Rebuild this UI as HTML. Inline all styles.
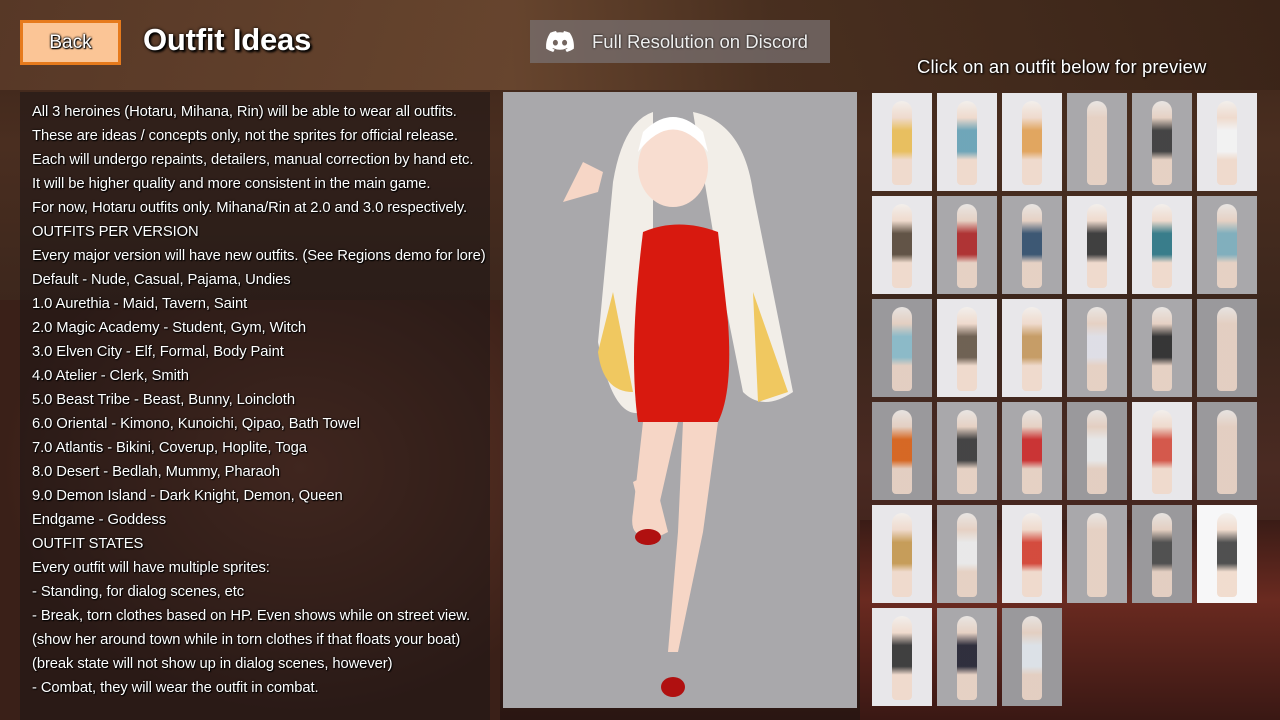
<!DOCTYPE html>
<html><head><meta charset="utf-8"><style>
*{margin:0;padding:0;box-sizing:border-box}
body{width:1280px;height:720px;overflow:hidden;position:relative;font-family:"Liberation Sans","DejaVu Sans",sans-serif;
background:linear-gradient(180deg,#3a2418 0%,#4a2e20 20%,#3b261c 45%,#4a2a22 65%,#3a1e18 85%,#2a1612 100%);}
.bg1{position:absolute;left:0;top:0;width:1280px;height:90px;background:linear-gradient(90deg,#5a3a28,#6b4830 40%,#4a3020 60%,#3a2418 100%);opacity:.9}
.bg2{position:absolute;left:860px;top:520px;width:420px;height:200px;background:linear-gradient(180deg,#3a1c16,#6a2a20 40%,#3a1814)}
.bg3{position:absolute;left:0;top:300px;width:500px;height:420px;background:radial-gradient(ellipse at 60% 40%,#6a3a2a 0%,#3a2018 70%)}
.back{position:absolute;left:20px;top:20px;width:101px;height:45px;background:#fbc596;border:3px solid #e67a1c;color:#fff;font-size:19px;text-align:center;line-height:39px;text-shadow:0 0 2px #000,0 0 2px #000,1px 1px 1px #000}
.title{position:absolute;left:143px;top:22px;color:#fff;font-size:31px;font-weight:bold;text-shadow:0 0 3px #000,2px 2px 2px #000;letter-spacing:-0.2px}
.disc{position:absolute;left:530px;top:20px;width:300px;height:43px;background:rgba(120,112,112,.75);color:#eee;font-size:18.5px;line-height:43px;text-shadow:0 0 2px #000}
.disc span{position:absolute;left:62px}
.disc svg{position:absolute;left:16px;top:11px}
.hint{position:absolute;left:917px;top:56px;color:#fff;font-size:18.5px;letter-spacing:0.1px;text-shadow:0 0 2px #000,1px 1px 2px #000}
.panel{position:absolute;left:20px;top:92px;width:470px;height:628px;background:rgba(30,22,22,.55)}
.txt{position:absolute;left:32px;top:100px;color:#fff;font-size:14.8px;line-height:24px;letter-spacing:-0.1px;text-shadow:0 0 2px #000,1px 1px 1px #000;white-space:nowrap}
.prev{position:absolute;left:503px;top:92px;width:354px;height:616px;background:#a9a8ab}
.t{position:absolute;width:60px;height:98px}
.t::after{content:"";position:absolute;left:20px;top:8px;width:20px;height:84px;border-radius:10px 10px 4px 4px;background:linear-gradient(180deg,#f4f0ec 0%,#f0d8c8 20%,var(--c,#f0d8c8) 35%,var(--c,#f0d8c8) 60%,#f0d8c8 70%,#f0d8c8 95%);opacity:.85}
.l{background:#e8e7ea}.m{background:#a9a8ab}.d{background:#9a999c}.w{background:#f7f7f8}
</style></head><body>
<div class="bg1"></div><div class="bg3"></div><div class="bg2"></div>
<div class="back">Back</div>
<div class="title">Outfit Ideas</div>
<div class="disc"><svg width="28" height="21" viewBox="0 0 28 21"><path fill="#fff" d="M23.7 1.8A23 23 0 0 0 18 0l-.7 1.5a21 21 0 0 0-6.5 0L10 0a23 23 0 0 0-5.7 1.8C.7 7.2-.3 12.5.2 17.7A23 23 0 0 0 7.2 21l1.5-2.4a15 15 0 0 1-2.3-1.1l.6-.4a16.5 16.5 0 0 0 14 0l.6.4a15 15 0 0 1-2.300 1.1l1.5 2.4a23 23 0 0 0 7-3.3c.6-6-.9-11.3-4.1-15.9zM9.4 14.5c-1.4 0-2.500-1.3-2.500-2.8s1.1-2.8 2.5-2.8 2.5 1.3 2.5 2.8-1.1 2.8-2.5 2.8zm9.2 0c-1.4 0-2.5-1.3-2.5-2.8s1.1-2.8 2.5-2.8 2.5 1.3 2.5 2.8-1.1 2.8-2.5 2.8z"/></svg><span>Full Resolution on Discord</span></div>
<div class="hint">Click on an outfit below for preview</div>
<div class="panel"></div>
<div class="txt">All 3 heroines (Hotaru, Mihana, Rin) will be able to wear all outfits.<br>These are ideas / concepts only, not the sprites for official release.<br>Each will undergo repaints, detailers, manual correction by hand etc.<br>It will be higher quality and more consistent in the main game.<br>For now, Hotaru outfits only. Mihana/Rin at 2.0 and 3.0 respectively.<br>OUTFITS PER VERSION<br>Every major version will have new outfits. (See Regions demo for lore)<br>Default - Nude, Casual, Pajama, Undies<br>1.0 Aurethia - Maid, Tavern, Saint<br>2.0 Magic Academy - Student, Gym, Witch<br>3.0 Elven City - Elf, Formal, Body Paint<br>4.0 Atelier - Clerk, Smith<br>5.0 Beast Tribe - Beast, Bunny, Loincloth<br>6.0 Oriental - Kimono, Kunoichi, Qipao, Bath Towel<br>7.0 Atlantis - Bikini, Coverup, Hoplite, Toga<br>8.0 Desert - Bedlah, Mummy, Pharaoh<br>9.0 Demon Island - Dark Knight, Demon, Queen<br>Endgame - Goddess<br>OUTFIT STATES<br>Every outfit will have multiple sprites:<br>- Standing, for dialog scenes, etc<br>- Break, torn clothes based on HP. Even shows while on street view.<br>(show her around town while in torn clothes if that floats your boat)<br>(break state will not show up in dialog scenes, however)<br>- Combat, they will wear the outfit in combat.</div>
<div class="prev">
<svg width="354" height="616" viewBox="0 0 354 616">
<path d="M150 20 Q120 30 110 90 L95 250 Q110 330 140 320 L150 240 Z" fill="#f2eee8"/>
<path d="M190 20 Q240 30 250 100 L290 300 Q260 320 240 300 L220 200 Z" fill="#f2eee8"/>
<path d="M110 200 L95 260 Q100 300 130 300 Z" fill="#f0c860"/>
<path d="M250 200 L285 300 L255 310 Z" fill="#f0c860"/>
<ellipse cx="170" cy="75" rx="35" ry="40" fill="#f8ddd0"/>
<path d="M135 60 Q170 15 205 60 L200 40 Q170 10 140 40Z" fill="#fff"/>
<path d="M140 140 Q175 125 215 140 L225 230 Q230 300 215 330 L135 330 Q125 260 140 140Z" fill="#d8190f"/>
<path d="M140 330 L130 420 Q125 450 150 440 L175 330Z" fill="#f6d6c6"/>
<path d="M180 330 L215 330 L200 440 L175 560 L165 560 L175 440Z" fill="#f6d6c6"/>
<path d="M130 390 L145 450 L165 440 L150 380Z" fill="#f6d6c6"/>
<ellipse cx="145" cy="445" rx="13" ry="8" fill="#b01010"/>
<ellipse cx="170" cy="595" rx="12" ry="10" fill="#b01010"/>
<path d="M95 100 L60 110 L80 70 L100 80Z" fill="#f6d6c6"/>
</svg>
</div>
<div class="t l" style="left:872px;top:93px;--c:#e8b848"></div><div class="t l" style="left:937px;top:93px;--c:#5a9ab0"></div><div class="t l" style="left:1002px;top:93px;--c:#e09a48"></div><div class="t m" style="left:1067px;top:93px"></div><div class="t m" style="left:1132px;top:93px;--c:#333"></div><div class="t l" style="left:1197px;top:93px;--c:#f4f4f4"></div>
<div class="t l" style="left:872px;top:196px;--c:#4a3a2a"></div><div class="t m" style="left:937px;top:196px;--c:#b02020"></div><div class="t m" style="left:1002px;top:196px;--c:#2a4a6a"></div><div class="t l" style="left:1067px;top:196px;--c:#222"></div><div class="t l" style="left:1132px;top:196px;--c:#1a6a7a"></div><div class="t m" style="left:1197px;top:196px;--c:#7ab0c0"></div>
<div class="t d" style="left:872px;top:299px;--c:#8ac0d0"></div><div class="t l" style="left:937px;top:299px;--c:#5a4a3a"></div><div class="t l" style="left:1002px;top:299px;--c:#c09050"></div><div class="t m" style="left:1067px;top:299px;--c:#e8e8f0"></div><div class="t m" style="left:1132px;top:299px;--c:#222"></div><div class="t d" style="left:1197px;top:299px"></div>
<div class="t d" style="left:872px;top:402px;--c:#e06010"></div><div class="t m" style="left:937px;top:402px;--c:#333"></div><div class="t m" style="left:1002px;top:402px;--c:#d02020"></div><div class="t d" style="left:1067px;top:402px;--c:#f4f4f4"></div><div class="t l" style="left:1132px;top:402px;--c:#d04030"></div><div class="t d" style="left:1197px;top:402px"></div>
<div class="t l" style="left:872px;top:505px;--c:#c09040"></div><div class="t m" style="left:937px;top:505px;--c:#f4f4f4"></div><div class="t l" style="left:1002px;top:505px;--c:#d03020"></div><div class="t m" style="left:1067px;top:505px"></div><div class="t d" style="left:1132px;top:505px;--c:#444"></div><div class="t w" style="left:1197px;top:505px;--c:#333"></div>
<div class="t l" style="left:872px;top:608px;--c:#222"></div><div class="t m" style="left:937px;top:608px;--c:#1a1a2a"></div><div class="t d" style="left:1002px;top:608px;--c:#e8eef4"></div>
</body></html>
